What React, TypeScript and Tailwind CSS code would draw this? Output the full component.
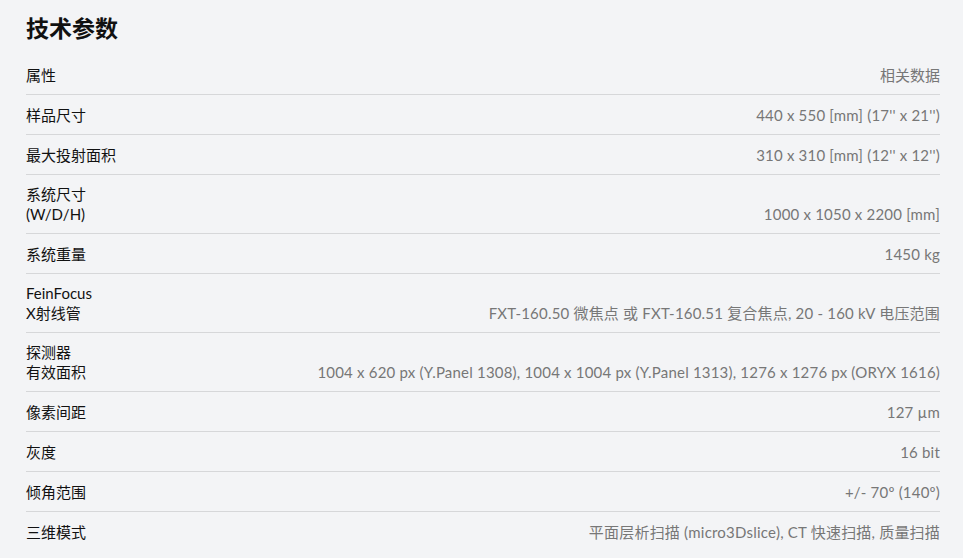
import React from "react";

const rows: { label: string[]; value: string }[] = [
  { label: ["样品尺寸"], value: "440 x 550 [mm] (17'' x 21'')" },
  { label: ["最大投射面积"], value: "310 x 310 [mm] (12'' x 12'')" },
  { label: ["系统尺寸", "(W/D/H)"], value: "1000 x 1050 x 2200 [mm]" },
  { label: ["系统重量"], value: "1450 kg" },
  { label: ["FeinFocus", "X射线管"], value: "FXT-160.50 微焦点 或 FXT-160.51 复合焦点, 20 - 160 kV 电压范围" },
  { label: ["探测器", "有效面积"], value: "1004 x 620 px (Y.Panel 1308), 1004 x 1004 px (Y.Panel 1313), 1276 x 1276 px (ORYX 1616)" },
  { label: ["像素间距"], value: "127 µm" },
  { label: ["灰度"], value: "16 bit" },
  { label: ["倾角范围"], value: "+/- 70º (140º)" },
  { label: ["三维模式"], value: "平面层析扫描 (micro3Dslice), CT 快速扫描, 质量扫描" },
];

export default function App() {
  return (
    <div
      className="w-[963px] h-[558px] bg-[#f3f4f6] pl-[26px] pr-[23px] overflow-hidden"
      style={{ fontFamily: "Lato, 'Noto Sans CJK SC', sans-serif" }}
    >
      <h2 className="pt-[13px] text-[23px] leading-[30px] font-bold text-[#111]">技术参数</h2>
      <div className="mt-[12px] flex flex-col">
        <div className="flex items-end justify-between pt-[10px] pb-[9px] border-b border-[#d6d7d9] text-[15px] leading-[20px]">
          <div className="text-[#111]">属性</div>
          <div className="text-[#777]">相关数据</div>
        </div>
        {rows.map((r, i) => {
          const two = r.label.length > 1;
          return (
            <div
              key={i}
              className={
                "flex items-end justify-between pt-[10px] pb-[9px] text-[15px] " +
                (two ? "leading-[19.5px] " : "leading-[20px] ") +
                (i < rows.length - 1 ? "border-b border-[#d6d7d9]" : "")
              }
            >
              <div className="text-[#111] shrink-0">
                {r.label.map((l, j) => (
                  <div key={j}>{l}</div>
                ))}
              </div>
              <div className="text-[#777] text-right tracking-[0.2px]">{r.value}</div>
            </div>
          );
        })}
      </div>
    </div>
  );
}
